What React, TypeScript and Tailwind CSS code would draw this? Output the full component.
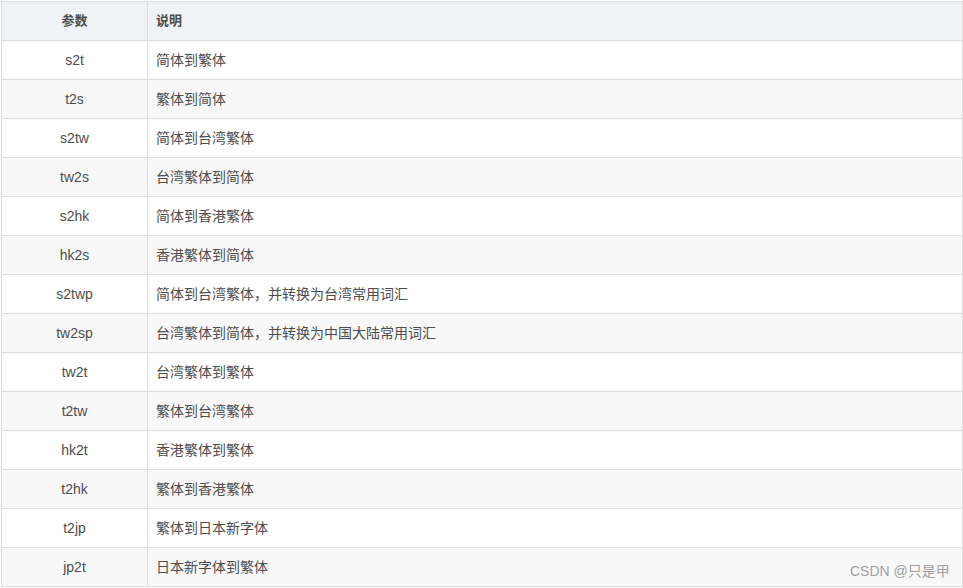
const rows: [string, string][] = [
  ["s2t", "简体到繁体"],
  ["t2s", "繁体到简体"],
  ["s2tw", "简体到台湾繁体"],
  ["tw2s", "台湾繁体到简体"],
  ["s2hk", "简体到香港繁体"],
  ["hk2s", "香港繁体到简体"],
  ["s2twp", "简体到台湾繁体，并转换为台湾常用词汇"],
  ["tw2sp", "台湾繁体到简体，并转换为中国大陆常用词汇"],
  ["tw2t", "台湾繁体到繁体"],
  ["t2tw", "繁体到台湾繁体"],
  ["hk2t", "香港繁体到繁体"],
  ["t2hk", "繁体到香港繁体"],
  ["t2jp", "繁体到日本新字体"],
  ["jp2t", "日本新字体到繁体"],
];

export default function App() {
  return (
    <div
      className="relative w-[963px] h-[588px] bg-white pt-px pl-px text-[14px] text-[#4d4d4d]"
      style={{ fontFamily: '"Liberation Sans", "Noto Sans CJK SC", sans-serif' }}
    >
      <table className="w-[962px] border-collapse">
        <thead>
          <tr className="bg-[#eff3f5]">
            <th className="w-[146px] h-[39px] border border-[#ddd] text-center text-[13px] font-bold text-[#4d4d4d]">参数</th>
            <th className="h-[39px] border border-[#ddd] text-left pl-[8px] text-[13px] font-bold text-[#4d4d4d]">说明</th>
          </tr>
        </thead>
        <tbody>
          {rows.map(([k, v], i) => (
            <tr key={k} className={i % 2 === 1 ? "bg-[#f8f8f8]" : "bg-white"}>
              <td className="h-[39px] border border-[#ddd] text-center">{k}</td>
              <td className="h-[39px] border border-[#ddd] pl-[8px]">{v}</td>
            </tr>
          ))}
        </tbody>
      </table>
      {/* watermark */}
      <div className="absolute left-[850px] top-[561px] text-[14px] text-[#a0a0a0]">CSDN @只是甲</div>
    </div>
  );
}
